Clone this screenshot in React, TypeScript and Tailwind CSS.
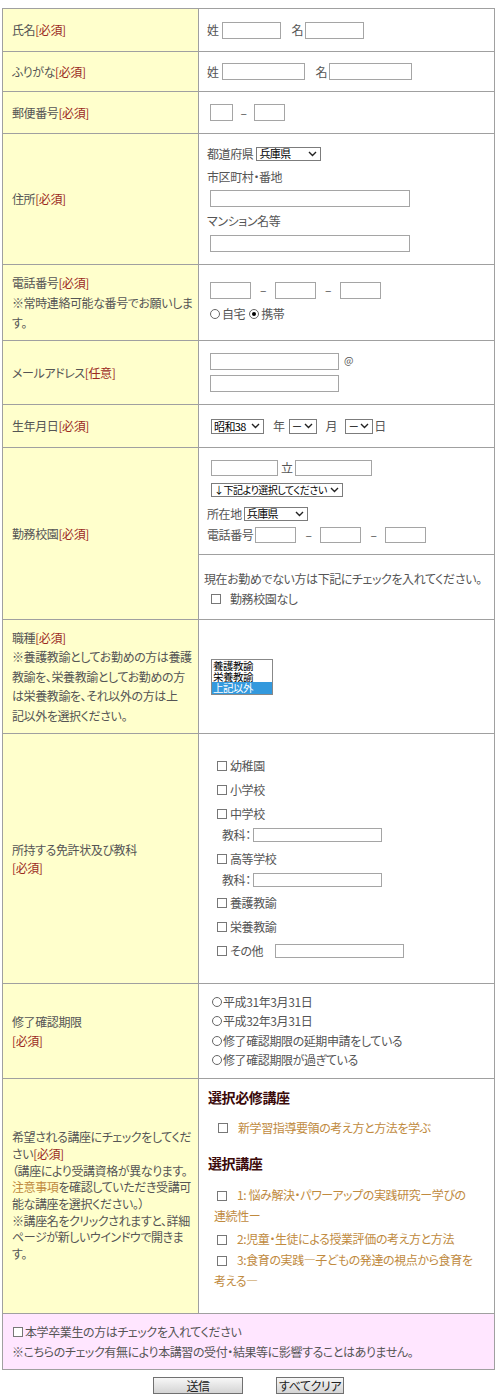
import React from 'react';

const Req = ({ t = '必須' }: { t?: string }) => <span className="text-[#9b2a1e]">[{t}]</span>;

const Field = ({ className }: { className: string }) => (
    <input type="text" className={`border border-[#a5a5a5] bg-white ${className}`} />
);

const Sel = ({
    className,
    size = 'text-[11px] tracking-[-0.6px]',
    children,
}: {
    className: string;
    size?: string;
    children: React.ReactNode;
}) => (
    <span
        className={`relative inline-flex items-center border border-[#7c7c7c] bg-white pl-[2px] leading-none text-black ${size} ${className}`}
    >
        <span className="whitespace-nowrap">{children}</span>
        <svg className="absolute right-[3px] top-1/2 -translate-y-1/2" width="9" height="6" viewBox="0 0 9 6">
            <path d="M1 1l3.5 3.5L8 1" stroke="#222" strokeWidth="1.4" fill="none" />
        </svg>
    </span>
);

const Check = ({ className = '' }: { className?: string }) => (
    <span className={`inline-block h-[10px] w-[10px] shrink-0 border border-[#777] bg-white ${className}`} />
);

const Radio = ({ on = false, className = '' }: { on?: boolean; className?: string }) => (
    <span
        className={`inline-flex h-[10px] w-[10px] shrink-0 items-center justify-center rounded-full border border-[#666] bg-white ${className}`}
    >
        {on && <span className="h-[4px] w-[4px] rounded-full bg-black" />}
    </span>
);

const Dash = ({ className }: { className: string }) => (
    <span className={`inline-block text-center ${className}`}>–</span>
);

const label =
    'flex w-[196px] shrink-0 flex-col justify-center whitespace-nowrap border-r border-[#a0a0a0] bg-[#ffffcc] pl-[9px]';

export default function App() {
    return (
        <div className="min-h-[1397px] bg-white pt-[8px] font-['Noto_Sans_CJK_JP',sans-serif] text-[12px] tracking-[-0.4px] text-[#555] [font-feature-settings:'palt']">
            <div className="ml-[2px] w-[493px] border border-[#a0a0a0]">
                {/* 氏名 */}
                <div className="flex h-[42px]">
                    <div className={label}>
                        <p>氏名<Req /></p>
                    </div>
                    <div className="flex flex-1 items-center pl-[8px]">
                        <span>姓</span>
                        <Field className="ml-[3px] h-[17px] w-[59px]" />
                        <span className="ml-[11px]">名</span>
                        <Field className="ml-[2px] h-[17px] w-[59px]" />
                    </div>
                </div>

                {/* ふりがな */}
                <div className="flex h-[40px] border-t border-[#a0a0a0]">
                    <div className={label}>
                        <p>ふりがな<Req /></p>
                    </div>
                    <div className="flex flex-1 items-center pl-[8px]">
                        <span>姓</span>
                        <Field className="ml-[3px] h-[17px] w-[83px]" />
                        <span className="ml-[11px]">名</span>
                        <Field className="ml-[2px] h-[17px] w-[83px]" />
                    </div>
                </div>

                {/* 郵便番号 */}
                <div className="flex h-[42px] border-t border-[#a0a0a0]">
                    <div className={label}>
                        <p>郵便番号<Req /></p>
                    </div>
                    <div className="flex flex-1 items-center pl-[11px]">
                        <Field className="h-[17px] w-[23px]" />
                        <Dash className="w-[21px]" />
                        <Field className="h-[17px] w-[31px]" />
                    </div>
                </div>

                {/* 住所 */}
                <div className="flex h-[131px] border-t border-[#a0a0a0]">
                    <div className={label}>
                        <p>住所<Req /></p>
                    </div>
                    <div className="flex flex-1 flex-col justify-center pl-[8px] leading-[20px]">
                        <div className="flex h-[14px] items-center">
                            <span>都道府県</span>
                            <Sel className="ml-[3px] h-[14px] w-[65px]">兵庫県</Sel>
                        </div>
                        <p className="mt-[6px]">市区町村・番地</p>
                        <Field className="ml-[3px] mt-[3px] h-[17px] w-[200px]" />
                        <p className="mt-[4px]">マンション名等</p>
                        <Field className="ml-[3px] mt-[4px] h-[17px] w-[200px]" />
                    </div>
                </div>

                {/* 電話番号 */}
                <div className="flex h-[76px] border-t border-[#a0a0a0]">
                    <div className={`${label} leading-[20px]`}>
                        <p>
                            電話番号<Req />
                            <br />
                            ※常時連絡可能な番号でお願いしま
                            <br />
                            す。
                        </p>
                    </div>
                    <div className="flex flex-1 flex-col justify-center pl-[11px]">
                        <div className="flex items-center">
                            <Field className="h-[17px] w-[41px]" />
                            <Dash className="w-[24px]" />
                            <Field className="h-[17px] w-[41px]" />
                            <Dash className="w-[24px]" />
                            <Field className="h-[17px] w-[41px]" />
                        </div>
                        <div className="mt-[5px] flex h-[20px] items-center">
                            <Radio />
                            <span className="ml-[2px]">自宅</span>
                            <Radio on className="ml-[4px]" />
                            <span className="ml-[2px]">携帯</span>
                        </div>
                    </div>
                </div>

                {/* メールアドレス */}
                <div className="flex h-[64px] border-t border-[#a0a0a0]">
                    <div className={label}>
                        <p>メールアドレス<Req t="任意" /></p>
                    </div>
                    <div className="flex flex-1 flex-col justify-center pl-[11px]">
                        <div className="flex items-start">
                            <Field className="h-[17px] w-[129px]" />
                            <span className="ml-[5px] mt-[1px] text-[10px] leading-[12px]">@</span>
                        </div>
                        <Field className="mt-[5px] h-[17px] w-[129px]" />
                    </div>
                </div>

                {/* 生年月日 */}
                <div className="flex h-[43px] border-t border-[#a0a0a0]">
                    <div className={label}>
                        <p>生年月日<Req /></p>
                    </div>
                    <div className="flex flex-1 items-center pl-[12px]">
                        <Sel className="h-[15px] w-[53px]">昭和38</Sel>
                        <span className="ml-[9px]">年</span>
                        <Sel className="ml-[4px] h-[15px] w-[28px]">－</Sel>
                        <span className="ml-[9px]">月</span>
                        <Sel className="ml-[8px] h-[15px] w-[28px]">－</Sel>
                        <span className="ml-[1px]">日</span>
                    </div>
                </div>

                {/* 勤務校園 */}
                <div className="flex h-[172px] border-t border-[#a0a0a0]">
                    <div className={label}>
                        <p>勤務校園<Req /></p>
                    </div>
                    <div className="flex flex-1 flex-col">
                        <div className="flex h-[106px] flex-col justify-center pl-[8px]">
                            <div className="flex h-[16px] items-center">
                                <Field className="ml-[4px] h-[16px] w-[67px]" />
                                <span className="ml-[3px]">立</span>
                                <Field className="ml-[2px] h-[16px] w-[77px]" />
                            </div>
                            <div className="ml-[4px] mt-[7px] flex">
                                <Sel className="h-[14px] w-[132px]" size="text-[10px] tracking-[-0.5px]">
                                    ↓下記より選択してください
                                </Sel>
                            </div>
                            <div className="mt-[10px] flex h-[14px] items-center">
                                <span>所在地</span>
                                <Sel className="ml-[2px] h-[14px] w-[64px]">兵庫県</Sel>
                            </div>
                            <div className="mt-[6px] flex h-[16px] items-center">
                                <span>電話番号</span>
                                <Field className="ml-[2px] h-[16px] w-[41px]" />
                                <Dash className="w-[24px]" />
                                <Field className="h-[16px] w-[41px]" />
                                <Dash className="w-[24px]" />
                                <Field className="h-[16px] w-[41px]" />
                            </div>
                        </div>
                        <div className="flex h-[65px] flex-col justify-center border-t border-[#a0a0a0] pl-[5px] pt-[4px] leading-[20px]">
                            <p>現在お勤めでない方は下記にチェックを入れてください。</p>
                            <div className="flex items-center">
                                <Check className="ml-[7px]" />
                                <span className="ml-[9px]">勤務校園なし</span>
                            </div>
                        </div>
                    </div>
                </div>

                {/* 職種 */}
                <div className="flex h-[114px] border-t border-[#a0a0a0]">
                    <div className={`${label} leading-[19.5px]`}>
                        <p>
                            職種<Req />
                            <br />
                            ※養護教諭としてお勤めの方は養護
                            <br />
                            教諭を、栄養教諭としてお勤めの方
                            <br />
                            は栄養教諭を、それ以外の方は上
                            <br />
                            記以外を選択ください。
                        </p>
                    </div>
                    <div className="flex flex-1 items-center pl-[12px]">
                        <div className="w-[62px] border border-[#888] bg-white text-[10.5px] leading-[11px] tracking-[-0.5px] text-black">
                            <div className="h-[11px] pl-[1px]">養護教諭</div>
                            <div className="h-[11px] pl-[1px]">栄養教諭</div>
                            <div className="h-[12px] bg-[#3399dd] pl-[1px] leading-[12px] text-white">上記以外</div>
                        </div>
                    </div>
                </div>

                {/* 免許状 */}
                <div className="flex h-[250px] border-t border-[#a0a0a0]">
                    <div className={`${label} leading-[18px]`}>
                        <p>
                            所持する免許状及び教科
                            <br />
                            <Req />
                        </p>
                    </div>
                    <div className="flex flex-1 flex-col justify-center pl-[18px]">
                        {['幼稚園', '小学校', '中学校'].map((s) => (
                            <div key={s} className="flex h-[24px] items-center">
                                <Check />
                                <span className="ml-[3px]">{s}</span>
                            </div>
                        ))}
                        <div className="flex h-[18px] items-center pl-[5px]">
                            <span>教科：</span>
                            <Field className="ml-[2px] h-[14px] w-[129px]" />
                        </div>
                        <div className="mt-[3px] flex h-[24px] items-center">
                            <Check />
                            <span className="ml-[3px]">高等学校</span>
                        </div>
                        <div className="flex h-[18px] items-center pl-[5px]">
                            <span>教科：</span>
                            <Field className="ml-[2px] h-[14px] w-[129px]" />
                        </div>
                        <div className="mt-[2px] flex h-[24px] items-center">
                            <Check />
                            <span className="ml-[3px]">養護教諭</span>
                        </div>
                        <div className="flex h-[24px] items-center">
                            <Check />
                            <span className="ml-[3px]">栄養教諭</span>
                        </div>
                        <div className="flex h-[24px] items-center">
                            <Check />
                            <span className="ml-[3px]">その他</span>
                            <Field className="ml-[12px] h-[14px] w-[129px]" />
                        </div>
                    </div>
                </div>

                {/* 修了確認期限 */}
                <div className="flex h-[95px] border-t border-[#a0a0a0]">
                    <div className={`${label} leading-[19px]`}>
                        <p>
                            修了確認期限
                            <br />
                            <Req />
                        </p>
                    </div>
                    <div className="flex flex-1 flex-col justify-center pl-[13px]">
                        {[
                            '平成31年3月31日',
                            '平成32年3月31日',
                            '修了確認期限の延期申請をしている',
                            '修了確認期限が過ぎている',
                        ].map((s) => (
                            <div key={s} className="flex h-[19.5px] items-center">
                                <Radio />
                                <span className="ml-[1px]">{s}</span>
                            </div>
                        ))}
                    </div>
                </div>

                {/* 講座 */}
                <div className="flex h-[235px] border-t border-[#a0a0a0]">
                    <div className={`${label} leading-[16.7px]`}>
                        <p>
                            希望される講座にチェックをしてくだ
                            <br />
                            さい<Req />
                            <br />
                            （講座により受講資格が異なります。
                            <br />
                            <a className="text-[#c08a3e]">注意事項</a>を確認していただき受講可
                            <br />
                            能な講座を選択ください。）
                            <br />
                            ※講座名をクリックされますと、詳細
                            <br />
                            ページが新しいウインドウで開きま
                            <br />
                            す。
                        </p>
                    </div>
                    <div className="flex flex-1 flex-col pl-[9px] pt-[8px]">
                        <h3 className="text-[14px] font-bold leading-[20px] text-[#3b0a0a]">選択必修講座</h3>
                        <div className="mt-[11px] flex h-[20px] items-center">
                            <Check className="ml-[10px]" />
                            <a className="ml-[10px] text-[#c08a3e]">新学習指導要領の考え方と方法を学ぶ</a>
                        </div>
                        <h3 className="mt-[15px] text-[14px] font-bold leading-[20px] text-[#3b0a0a]">選択講座</h3>
                        <div className="mt-[11px] pl-[6px] leading-[21px]">
                            <Check className="ml-[3px] align-[-1px]" />
                            <a className="ml-[10px] text-[#c08a3e]">
                                1: 悩み解決・パワーアップの実践研究ー学びの
                                <br />
                                連続性ー
                            </a>
                        </div>
                        <div className="mt-[2px] pl-[6px] leading-[21px]">
                            <Check className="ml-[3px] align-[-1px]" />
                            <a className="ml-[10px] text-[#c08a3e]">2:児童・生徒による授業評価の考え方と方法</a>
                        </div>
                        <div className="pl-[6px] leading-[21px]">
                            <Check className="ml-[3px] align-[-1px]" />
                            <a className="ml-[10px] text-[#c08a3e]">
                                3:食育の実践―子どもの発達の視点から食育を
                                <br />
                                考える―
                            </a>
                        </div>
                    </div>
                </div>

                {/* 卒業生 */}
                <div className="flex h-[56px] flex-col justify-center border-t border-[#a0a0a0] bg-[#ffe6ff] pl-[10px] leading-[20px]">
                    <div className="flex items-center">
                        <Check />
                        <span className="ml-[2px]">本学卒業生の方はチェックを入れてください</span>
                    </div>
                    <p className="-ml-[1px]">※こちらのチェック有無により本講習の受付・結果等に影響することはありません。</p>
                </div>
            </div>

            <div className="ml-[2px] mt-[7px] flex w-[493px] justify-center gap-[33px]">
                <button className="h-[17px] w-[90px] border border-[#707070] bg-linear-to-b from-[#f7f7f7] to-[#d4d4d4] text-[12px] leading-[15px] text-[#222]">
                    送信
                </button>
                <button className="h-[17px] w-[68px] border border-[#707070] bg-linear-to-b from-[#f7f7f7] to-[#d4d4d4] text-[12px] leading-[15px] text-[#222]">
                    すべてクリア
                </button>
            </div>
        </div>
    );
}
